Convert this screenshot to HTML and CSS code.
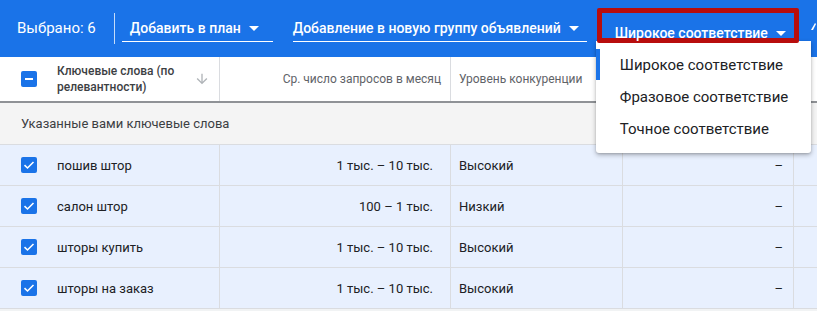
FILE: index.html
```html
<!DOCTYPE html>
<html lang="ru">
<head>
<meta charset="utf-8">
<title>Ключевые слова</title>
<link rel="stylesheet" href="styles.css">
</head>
<body>
<div class="app">
  <header class="toolbar">
    <span class="selected">Выбрано: 6</span>
    <span class="divider"></span>
    <button class="dd dd-plan">Добавить в план<span class="caret"></span></button>
    <button class="dd dd-group">Добавление в новую группу объявлений<span class="caret"></span></button>
    <div class="dd-wrap">
      <button class="dd dd-match">Широкое соответствие<span class="caret"></span></button>
      <ul class="menu">
        <li class="menu-item active">Широкое соответствие</li>
        <li class="menu-item">Фразовое соответствие</li>
        <li class="menu-item">Точное соответствие</li>
      </ul>
    </div>
    <svg class="edge-icon" width="14" height="14" viewBox="0 0 14 14"><path d="M1 10 L5 3 L6 4 L3 10 Z" fill="#fff"/></svg>
  </header>

  <div class="table">
    <div class="row head">
      <div class="cell c-kw">
        <span class="cb cb-ind"><svg width="16" height="16" viewBox="0 0 16 16"><rect x="4" y="7" width="8" height="2" fill="#fff"/></svg></span>
        <span class="kw-title">Ключевые слова (по релевантности)</span>
        <svg class="sort" width="16" height="16" viewBox="0 0 24 24"><path d="M20 12l-1.41-1.41L13 16.17V4h-2v12.17l-5.58-5.59L4 12l8 8 8-8z" fill="#b0b4b8"/></svg>
      </div>
      <div class="cell c-num">Ср. число запросов в месяц</div>
      <div class="cell c-comp">Уровень конкуренции</div>
      <div class="cell"></div>
      <div class="cell last"></div>
    </div>

    <div class="group">Указанные вами ключевые слова</div>

    <div class="row data">
      <div class="cell c-kw"><span class="cb"><svg width="16" height="16" viewBox="0 0 16 16"><path d="M3.5 8.2 L6.5 11 L12.5 5" stroke="#fff" stroke-width="1.6" fill="none"/></svg></span><span>пошив штор</span></div>
      <div class="cell c-num">1 тыс. – 10 тыс.</div>
      <div class="cell c-comp">Высокий</div>
      <div class="cell c-dash">–</div>
      <div class="cell last"></div>
    </div>
    <div class="row data">
      <div class="cell c-kw"><span class="cb"><svg width="16" height="16" viewBox="0 0 16 16"><path d="M3.5 8.2 L6.5 11 L12.5 5" stroke="#fff" stroke-width="1.6" fill="none"/></svg></span><span>салон штор</span></div>
      <div class="cell c-num">100 – 1 тыс.</div>
      <div class="cell c-comp">Низкий</div>
      <div class="cell c-dash">–</div>
      <div class="cell last"></div>
    </div>
    <div class="row data">
      <div class="cell c-kw"><span class="cb"><svg width="16" height="16" viewBox="0 0 16 16"><path d="M3.5 8.2 L6.5 11 L12.5 5" stroke="#fff" stroke-width="1.6" fill="none"/></svg></span><span>шторы купить</span></div>
      <div class="cell c-num">1 тыс. – 10 тыс.</div>
      <div class="cell c-comp">Высокий</div>
      <div class="cell c-dash">–</div>
      <div class="cell last"></div>
    </div>
    <div class="row data">
      <div class="cell c-kw"><span class="cb"><svg width="16" height="16" viewBox="0 0 16 16"><path d="M3.5 8.2 L6.5 11 L12.5 5" stroke="#fff" stroke-width="1.6" fill="none"/></svg></span><span>шторы на заказ</span></div>
      <div class="cell c-num">1 тыс. – 10 тыс.</div>
      <div class="cell c-comp">Высокий</div>
      <div class="cell c-dash">–</div>
      <div class="cell last"></div>
    </div>
    <div class="group tail"></div>
  </div>
</div>
</body>
</html>
```

FILE: styles.css
```css
* { box-sizing: border-box; }
html, body { margin: 0; padding: 0; }
body {
  width: 817px;
  height: 311px;
  overflow: hidden;
  background: #fff;
  font-family: Roboto, "Noto Sans", "Liberation Sans", sans-serif;
  color: #202124;
}
.app { width: 817px; }

.toolbar {
  height: 57px;
  background: #1a73e8;
  display: flex;
  align-items: flex-start;
  padding-left: 17px;
  white-space: nowrap;
  position: relative;
  z-index: 2;
}
.toolbar > * { flex: none; }
.selected {
  color: #fff;
  font-size: 15px;
  line-height: 20px;
  margin-top: 18px;
}
.divider {
  width: 1px;
  height: 31px;
  margin-top: 13px;
  margin-left: 18px;
  background: rgba(255,255,255,0.75);
}
.dd {
  font-family: inherit;
  background: transparent;
  border: 0;
  border-bottom: 1px solid #fff;
  color: #fff;
  font-size: 14px;
  font-weight: 500;
  line-height: 20px;
  height: 42px;
  padding: 18px 0 0 0;
  display: flex;
  align-items: flex-start;
  cursor: pointer;
}
.caret {
  width: 0;
  height: 0;
  border-left: 5px solid transparent;
  border-right: 5px solid transparent;
  border-top: 5px solid #fff;
  margin-top: 8px;
  margin-left: 8px;
}
.dd-plan { margin-left: 7px; padding-left: 8px; padding-right: 14px; }
.dd-group { margin-left: 20px; padding-right: 8px; }
.dd-wrap { position: relative; margin-left: 10px; margin-top: 8px; }
.dd-match {
  height: 35px;
  border: 5px solid #b80d0d;
  border-radius: 2px;
  padding: 10px 8px 0 13px;
}
.menu {
  position: absolute;
  top: 33px;
  left: -1px;
  width: 215px;
  margin: 0;
  padding: 8px 0;
  list-style: none;
  background: #fff;
  box-shadow: 0 2px 5px rgba(0,0,0,0.28), 0 1px 2px rgba(0,0,0,0.12);
  border-radius: 0 0 3px 3px;
  z-index: -1;
}
.menu-item {
  height: 32px;
  line-height: 32px;
  padding-left: 24px;
  font-size: 15px;
  color: #202124;
  position: relative;
}
.menu-item.active::before {
  content: "";
  position: absolute;
  left: 0;
  top: 0;
  width: 4px;
  height: 31px;
  background: #1a73e8;
}
.edge-icon { margin-left: 11px; margin-top: 20px; }

.table { position: relative; z-index: 1; }
.row {
  display: grid;
  grid-template-columns: 220px 231px 172px 171px 1fr;
}
.cell {
  border-right: 1px solid #dadce0;
  display: flex;
  align-items: center;
  font-size: 13px;
}
.cell.last { border-right: 0; }
.head {
  height: 46px;
  border-bottom: 2px solid #8f9296;
  background: #fff;
}
.head .cell { font-size: 12px; color: #5f6368; }
.head .c-kw { padding-left: 21px; }
.kw-title {
  font-weight: 500;
  color: #3c4043;
  line-height: 16px;
  width: 124px;
  margin-left: 20px;
}
.sort { margin-left: 13px; }
.head .c-num { justify-content: flex-end; padding-right: 9px; }
.head .c-comp { padding-left: 8px; }

.cb {
  width: 16px;
  height: 16px;
  border-radius: 2px;
  background: #1a73e8;
  display: inline-flex;
  flex: none;
}
.cb svg { display: block; }

.group {
  height: 42px;
  background: #f4f4f4;
  border-bottom: 1px solid #dadce0;
  padding-left: 21px;
  display: flex;
  align-items: center;
  font-size: 13px;
  color: #3c4043;
}
.group.tail { height: 10px; background: #f1f3f4; }

.data {
  height: 41px;
  background: #e8f0fe;
  border-bottom: 1px solid #dadce0;
}
.data .c-kw { padding-left: 21px; gap: 20px; color: #202124; }
.data .c-num { justify-content: flex-end; padding-right: 17px; color: #202124; }
.data .c-comp { padding-left: 8px; color: #202124; }
.data .c-dash { justify-content: flex-end; padding-right: 10px; color: #202124; }
```
